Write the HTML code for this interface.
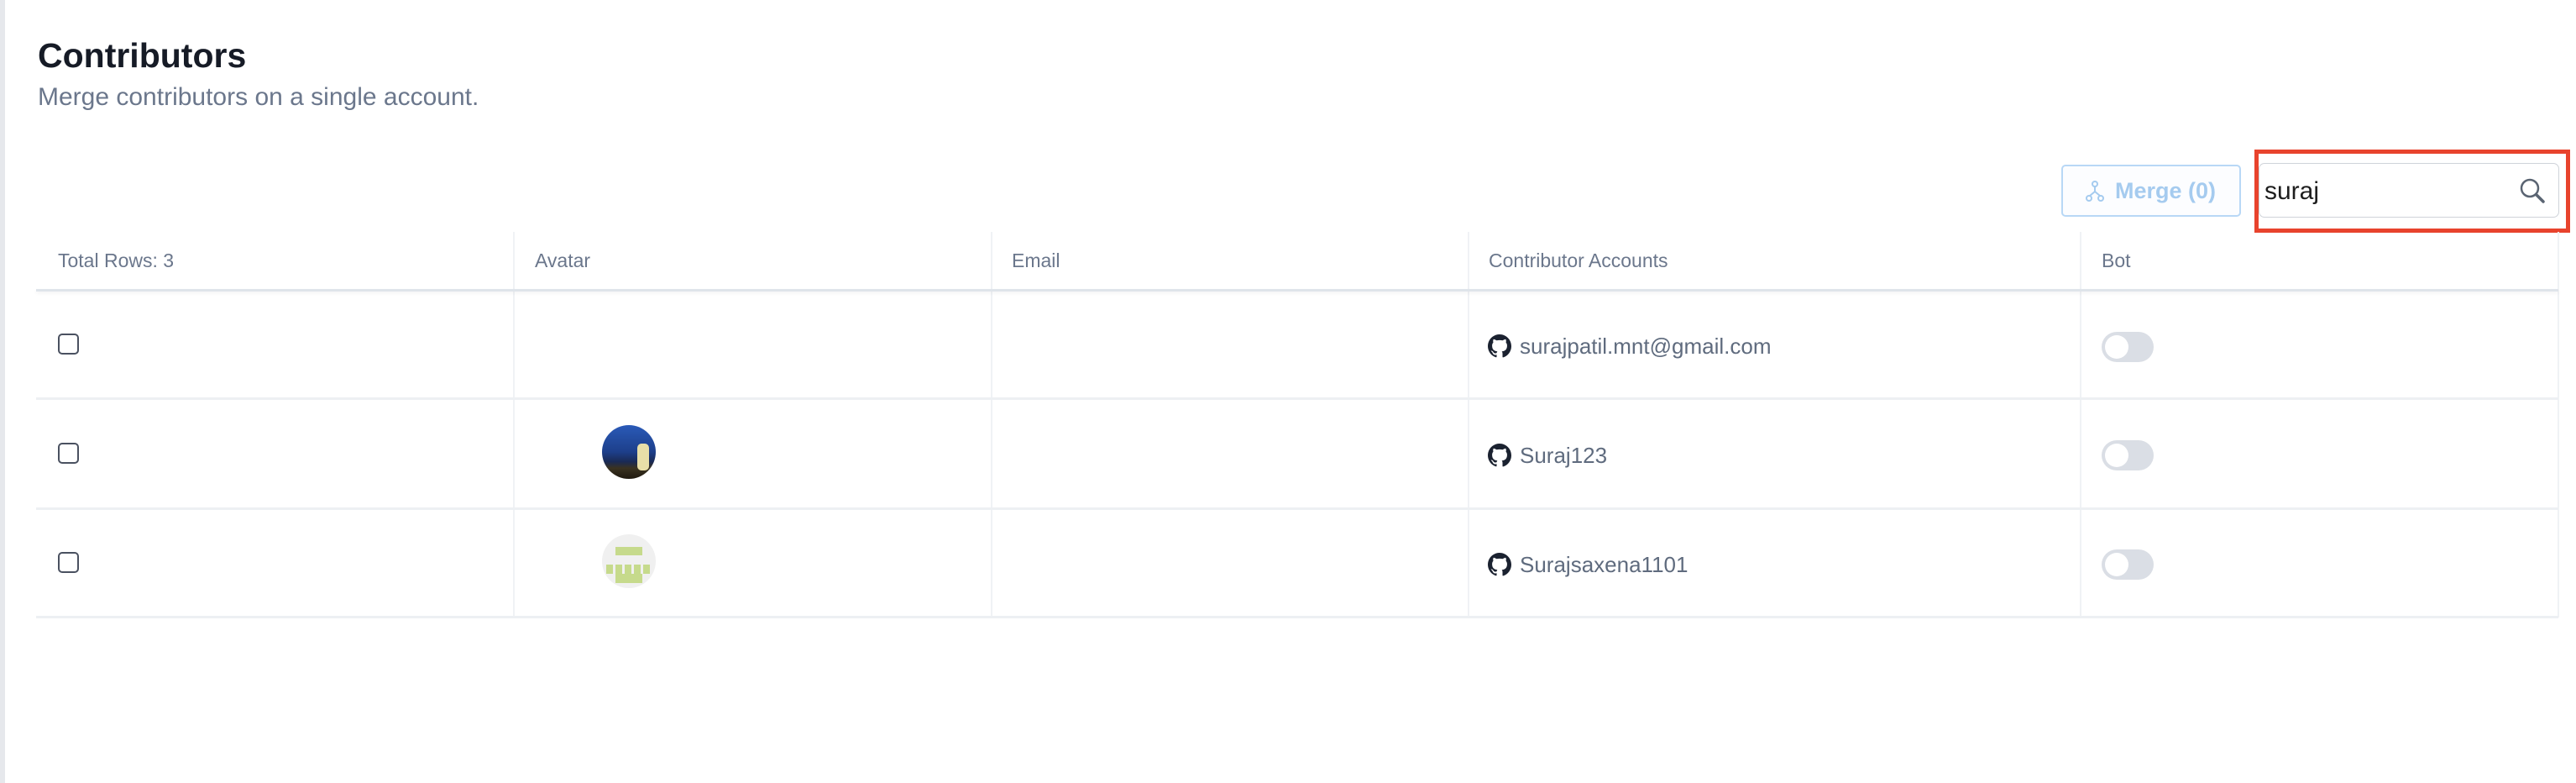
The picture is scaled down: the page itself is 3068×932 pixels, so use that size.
<!DOCTYPE html>
<html><head><meta charset="utf-8"><style>
*{box-sizing:border-box;margin:0;padding:0}
body{width:3068px;height:932px;background:#fff;font-family:"Liberation Sans",sans-serif;position:relative;overflow:hidden}
.lb{position:absolute;left:0;top:0;width:6px;height:932px;background:#e6e8ec}
.abs{position:absolute}
h1{position:absolute;left:45px;top:43px;font-size:41px;font-weight:bold;color:#161b26}
.sub{position:absolute;left:45px;top:99px;font-size:30px;color:#6b778c}
.vl{position:absolute;width:2px;background:#f0f2f5;top:276px;height:459px}
.hl{position:absolute;left:43px;width:3004px;height:3px;background:#edf0f3}
.th{position:absolute;top:297px;font-size:23px;color:#6b778c}
.cb{position:absolute;left:69px;width:25px;height:25px;border:2px solid #4a5160;border-radius:5px}
.gh{position:absolute;left:1772px;width:28px;height:28px}
.acc{position:absolute;left:1810px;font-size:26px;color:#5f6b7e}
.tg{position:absolute;left:2503px;width:62px;height:36px;border-radius:18px;background:#dadee5}
.tg::after{content:"";position:absolute;left:4px;top:4px;width:28px;height:28px;border-radius:50%;background:#fff}
</style></head><body>
<div class="lb"></div>
<h1>Contributors</h1>
<div class="sub">Merge contributors on a single account.</div>

<div class="abs" style="left:2455px;top:196px;width:214px;height:62px;border:2px solid #b8d8f6;border-radius:5px;background:#fcfdff;color:#a5cbef;font-size:27px;font-weight:bold;line-height:58px;padding-left:62px">Merge (0)
<svg class="abs" style="left:27px;top:17px" width="22" height="26" viewBox="0 0 22 26" fill="none" stroke="#a5cbef" stroke-width="2"><circle cx="11" cy="4" r="3"/><circle cx="4" cy="21" r="3"/><circle cx="18" cy="21" r="3"/><path d="M11 7v6M11 13L5 18M11 13l6 5"/></svg></div>

<div class="abs" style="left:2685px;top:178px;width:376px;height:99px;border:5px solid #e8432d"></div>
<div class="abs" style="left:2690px;top:194px;width:358px;height:65px;border:1px solid #cfd3d9;border-radius:7px;background:#fff"></div>
<div class="abs" style="left:2697px;top:211px;font-size:30px;color:#1e1e1e">suraj</div>
<svg class="abs" style="left:3000px;top:211px" width="32" height="32" viewBox="0 0 32 32" fill="none" stroke="#5a6472" stroke-width="2.5"><circle cx="13" cy="13" r="10"/><path d="M20.5 20.5L29 29" stroke-width="3.5" stroke-linecap="round"/></svg>

<div class="vl" style="left:611px"></div>
<div class="vl" style="left:1180px"></div>
<div class="vl" style="left:1748px"></div>
<div class="vl" style="left:2477px"></div>
<div class="vl" style="left:3046px"></div>
<div class="hl" style="top:344px;background:#dfe4ea;box-shadow:0 2px 4px rgba(0,0,0,.06)"></div>
<div class="hl" style="top:473px"></div>
<div class="hl" style="top:604px"></div>
<div class="hl" style="top:733px"></div>

<div class="th" style="left:69px">Total Rows: 3</div>
<div class="th" style="left:637px">Avatar</div>
<div class="th" style="left:1205px">Email</div>
<div class="th" style="left:1773px">Contributor Accounts</div>
<div class="th" style="left:2503px">Bot</div>

<div class="cb" style="top:397px"></div>
<div class="cb" style="top:527px"></div>
<div class="cb" style="top:657px"></div>

<div class="abs" style="left:717px;top:506px;width:64px;height:64px;border-radius:50%;overflow:hidden;background:linear-gradient(180deg,#2a5ab8 0%,#1d3f8a 50%,#1a2a55 68%,#3a3220 80%,#201a10 100%)"><div class="abs" style="left:42px;top:22px;width:14px;height:32px;background:#e8dfa8;border-radius:5px"></div></div>
<div class="abs" style="left:717px;top:636px;width:64px;height:64px;border-radius:50%;background:#f0f0f0;overflow:hidden">
<div class="abs" style="left:16px;top:15px;width:32px;height:10px;background:#c6da8c"></div>
<div class="abs" style="left:5px;top:36px;width:54px;height:11px;background:repeating-linear-gradient(90deg,#c6da8c 0 8px,#f0f0f0 8px 11px)"></div>
<div class="abs" style="left:16px;top:47px;width:32px;height:11px;background:#c6da8c"></div></div>

<svg class="gh" style="top:398px" viewBox="0 0 16 16"><path fill="#1b2230" d="M8 0C3.58 0 0 3.58 0 8c0 3.54 2.29 6.53 5.47 7.59.4.07.55-.17.55-.38v-1.33c-2.230.48-2.7-1.07-2.7-1.07-.36-.92-.89-1.17-.89-1.17-.73-.5.05-.49.05-.49.8.06 1.23.83 1.23.83.72 1.22 1.87.87 2.33.66.07-.52.28-.87.51-1.07-1.78-.2-3.64-.89-3.64-3.95 0-.87.31-1.59.82-2.15-.08-.2-.36-1.02.08-2.12 0 0 .67-.21 2.2.82a7.6 7.6 0 0 1 4 0c1.53-1.04 2.2-.82 2.2-.82.44 1.1.16 1.92.08 2.12.51.56.82 1.27.82 2.15 0 3.07-1.87 3.75-3.65 3.95.29.25.54.73.54 1.48v2.2c0 .21.15.46.55.38A8 8 0 0 0 16 8c0-4.42-3.58-8-8-8z"/></svg>
<svg class="gh" style="top:528px" viewBox="0 0 16 16"><path fill="#1b2230" d="M8 0C3.58 0 0 3.58 0 8c0 3.54 2.29 6.53 5.47 7.59.4.07.55-.17.55-.38v-1.33c-2.23.48-2.7-1.07-2.7-1.07-.36-.92-.89-1.17-.89-1.17-.73-.5.05-.49.05-.49.8.06 1.23.83 1.23.83.72 1.22 1.87.87 2.33.66.07-.52.28-.87.51-1.07-1.78-.2-3.64-.89-3.64-3.95 0-.87.31-1.59.82-2.15-.08-.2-.36-1.02.08-2.12 0 0 .67-.21 2.2.82a7.6 7.6 0 0 1 4 0c1.53-1.04 2.2-.82 2.2-.82.44 1.1.16 1.92.08 2.12.51.56.82 1.27.82 2.15 0 3.07-1.87 3.75-3.65 3.95.29.25.54.73.54 1.48v2.2c0 .21.15.46.55.38A8 8 0 0 0 16 8c0-4.42-3.58-8-8-8z"/></svg>
<svg class="gh" style="top:658px" viewBox="0 0 16 16"><path fill="#1b2230" d="M8 0C3.58 0 0 3.58 0 8c0 3.54 2.29 6.53 5.47 7.59.4.07.55-.17.55-.38v-1.33c-2.23.48-2.7-1.07-2.7-1.07-.36-.92-.89-1.17-.89-1.17-.73-.5.05-.49.05-.49.8.06 1.23.83 1.23.83.72 1.22 1.87.87 2.33.66.07-.52.28-.87.51-1.07-1.78-.2-3.64-.89-3.64-3.95 0-.87.31-1.59.82-2.15-.08-.2-.36-1.02.08-2.12 0 0 .67-.21 2.2.82a7.6 7.6 0 0 1 4 0c1.53-1.04 2.2-.82 2.2-.82.44 1.1.16 1.92.08 2.12.51.56.82 1.27.82 2.15 0 3.07-1.87 3.75-3.65 3.950.29.25.54.73.54 1.48v2.2c0 .21.15.46.55.38A8 8 0 0 0 16 8c0-4.42-3.58-8-8-8z"/></svg>
<div class="acc" style="top:397px">surajpatil.mnt@gmail.com</div>
<div class="acc" style="top:527px">Suraj123</div>
<div class="acc" style="top:657px">Surajsaxena1101</div>

<div class="tg" style="top:395px"></div>
<div class="tg" style="top:524px"></div>
<div class="tg" style="top:654px"></div>
</body></html>
